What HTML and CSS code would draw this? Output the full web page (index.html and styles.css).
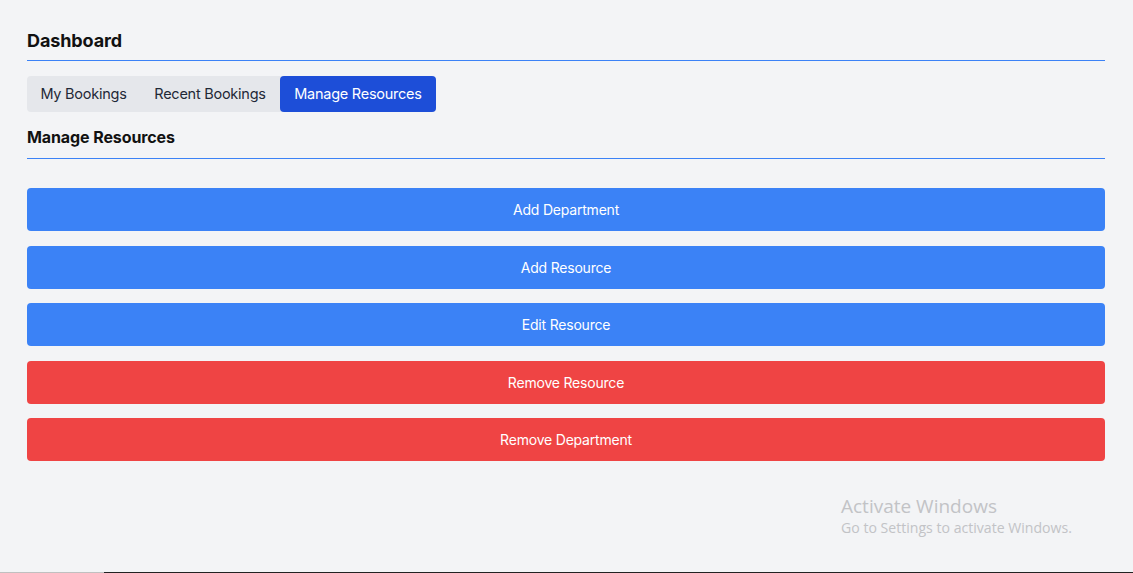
FILE: index.html
```html
<!DOCTYPE html>
<html>
<head>
<meta charset="utf-8">
<link rel="stylesheet" href="styles.css">
</head>
<body>
<div class="page">
  <h1 class="title">Dashboard</h1>
  <div class="tabs">
    <button class="tab">My Bookings</button>
    <button class="tab">Recent Bookings</button>
    <button class="tab active">Manage Resources</button>
  </div>
  <h2 class="subtitle">Manage Resources</h2>
  <div class="actions">
    <button class="btn blue">Add Department</button>
    <button class="btn blue">Add Resource</button>
    <button class="btn blue">Edit Resource</button>
    <button class="btn red">Remove Resource</button>
    <button class="btn red">Remove Department</button>
  </div>
</div>
<div class="watermark">
  <div class="wm-title">Activate Windows</div>
  <div class="wm-sub">Go to Settings to activate Windows.</div>
</div>
<div class="taskbar"><div class="tb-left"></div><div class="tb-right"></div></div>
</body>
</html>
```
FILE: styles.css
```css
html, body {
  margin: 0;
  padding: 0;
  background: #f3f4f6;
  height: 100%;
}
body {
  font-family: Inter, "Noto Sans", sans-serif;
  color: #111;
  position: relative;
  overflow: hidden;
}
.page {
  padding: 29px 28px 0 27px;
}
.title {
  margin: 0;
  font-size: 18px;
  font-weight: 700;
  line-height: 24px;
  padding-bottom: 7px;
  border-bottom: 1px solid #3b82f6;
  letter-spacing: -0.1px;
}
.tabs {
  display: inline-flex;
  margin-top: 15px;
  background: #e5e7eb;
  border-radius: 4px;
}
.tab {
  border: none;
  background: transparent;
  font-family: inherit;
  font-size: 14.5px;
  color: #1f2937;
  height: 36px;
  padding: 0 0 1px;
  border-radius: 4px;
  letter-spacing: -0.25px;
}
.tab:nth-child(1) { width: 113px; }
.tab:nth-child(2) { width: 140px; }
.tab:nth-child(3) { width: 156px; }
.tab.active {
  background: #1d4ed8;
  color: #fff;
}
.subtitle {
  margin: 14px 0 0;
  font-size: 16px;
  font-weight: 700;
  line-height: 22px;
  padding-bottom: 10px;
  border-bottom: 1px solid #3b82f6;
  letter-spacing: -0.1px;
}
.actions {
  display: flex;
  flex-direction: column;
  gap: 14.5px;
  margin-top: 29px;
}
.btn {
  border: none;
  height: 43px;
  border-radius: 4px;
  color: #fff;
  font-family: inherit;
  font-size: 14px;
  letter-spacing: -0.2px;
}
.btn.blue { background: #3b82f6; }
.btn.red { background: #ef4444; }
.watermark {
  position: absolute;
  left: 841px;
  top: 494px;
  color: #c2c3c6;
  font-family: "Open Sans", "Noto Sans", sans-serif;
}
.wm-title {
  font-size: 19px;
  line-height: 24px;
}
.wm-sub {
  font-size: 14.1px;
  line-height: 20px;
}
.taskbar {
  position: absolute;
  left: 0;
  right: 0;
  bottom: 0;
  height: 1px;
  display: flex;
}
.tb-left { width: 104px; background: #c0c0c0; }
.tb-right { flex: 1; background: #222; }
```
